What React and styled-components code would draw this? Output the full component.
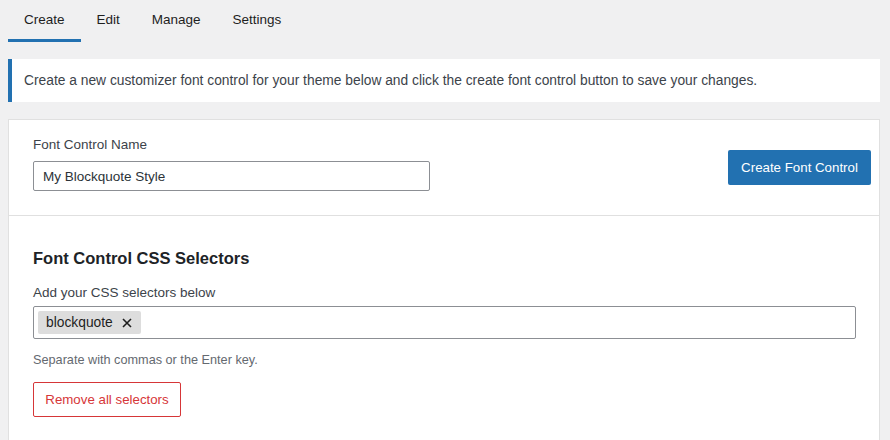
import styled, { createGlobalStyle } from "styled-components";

const GlobalStyle = createGlobalStyle`
  html, body {
    margin: 0;
    padding: 0;
    background: #f0f0f1;
  }
  body {
    font-family: "Liberation Sans", Arial, sans-serif;
    color: #1e1e1e;
    -webkit-font-smoothing: antialiased;
  }
`;

const Page = styled.div`
  width: 872px;
  padding: 0 10px 0 8px;
`;

const Tabs = styled.nav`
  display: flex;
  height: 42px;
`;

const Tab = styled.button`
  appearance: none;
  background: none;
  border: 0;
  padding: 0 16px 3px;
  font: 500 13.5px "Liberation Sans", Arial, sans-serif;
  color: #1e1e1e;
  box-shadow: ${(p) => (p.active ? "inset 0 -3px 0 #2271b1" : "none")};
  cursor: pointer;
`;

const Notice = styled.div`
  margin-top: 17px;
  height: 43px;
  display: flex;
  align-items: center;
  background: #fff;
  border-left: 4px solid #2271b1;
  padding: 0 12px;
  font-size: 13.8px;
  color: #3c434a;
`;

const Card = styled.div`
  margin-top: 17px;
  background: #fff;
  border: 1px solid #e0e0e0;
  border-bottom: 0;
`;

const Section = styled.div`
  padding: ${(p) => p.pad};
  & + & {
    border-top: 1px solid #e0e0e0;
  }
`;

const Row = styled.div`
  display: flex;
  justify-content: space-between;
  align-items: flex-end;
`;

const Field = styled.div`
  display: flex;
  flex-direction: column;
`;

const Label = styled.label`
  font-size: 13.5px;
  line-height: 20px;
  color: #3c434a;
  margin-bottom: ${(p) => p.space}px;
`;

const TextInput = styled.input`
  box-sizing: border-box;
  width: 397px;
  height: 30px;
  padding: 0 9px;
  border: 1px solid #8c8f94;
  border-radius: 2px;
  font: 13.5px "Liberation Sans", Arial, sans-serif;
  color: #2c3338;
  outline: none;
`;

const PrimaryButton = styled.button`
  box-sizing: border-box;
  width: 143px;
  height: 35px;
  margin-bottom: 6px;
  background: #2271b1;
  border: 0;
  border-radius: 2px;
  color: #fff;
  font: 13.3px "Liberation Sans", Arial, sans-serif;
  cursor: pointer;
`;

const Heading = styled.h2`
  margin: 0 0 15px;
  font-size: 16.5px;
  line-height: 20px;
  font-weight: 700;
  color: #1d2327;
`;

const TokenField = styled.div`
  box-sizing: border-box;
  height: 33px;
  display: flex;
  align-items: center;
  padding: 0 4px;
  border: 1px solid #8c8f94;
  border-radius: 2px;
`;

const Token = styled.span`
  display: inline-flex;
  align-items: center;
  gap: 9px;
  height: 23px;
  padding: 0 9px 0 8px;
  background: #ddd;
  border-radius: 2px;
  font-size: 13.8px;
  color: #1e1e1e;
`;

const RemoveToken = styled.span`
  display: inline-flex;
  svg {
    display: block;
  }
`;

const Help = styled.p`
  margin: 12px 0 13px;
  font-size: 12.7px;
  line-height: 18px;
  color: #646970;
`;

const DangerButton = styled.button`
  box-sizing: border-box;
  width: 148px;
  height: 35px;
  background: #fff;
  border: 1px solid #d63638;
  border-radius: 2px;
  color: #d63638;
  font: 13.3px "Liberation Sans", Arial, sans-serif;
  cursor: pointer;
`;

const tabs = [
  { label: "Create", active: true },
  { label: "Edit" },
  { label: "Manage" },
  { label: "Settings" },
];

const App = () => {
  return (
    <Page>
      <GlobalStyle />
      <Tabs>
        {tabs.map((t) => (
          <Tab key={t.label} active={t.active}>
            {t.label}
          </Tab>
        ))}
      </Tabs>

      <Notice>
        Create a new customizer font control for your theme below and click the create font control
        button to save your changes.
      </Notice>

      <Card>
        <Section pad="15px 8px 24px 24px">
          <Row>
            <Field>
              <Label space={6}>Font Control Name</Label>
              <TextInput defaultValue="My Blockquote Style" />
            </Field>
            <PrimaryButton>Create Font Control</PrimaryButton>
          </Row>
        </Section>

        <Section pad="32px 23px 40px 24px">
          <Heading>Font Control CSS Selectors</Heading>
          <Label as="div" space={3}>Add your CSS selectors below</Label>
          <TokenField>
            <Token>
              blockquote
              <RemoveToken>
                <svg width="10" height="10" viewBox="0 0 10 10">
                  <path d="M1 1l8 8M9 1l-8 8" stroke="#1e1e1e" strokeWidth="1.6" />
                </svg>
              </RemoveToken>
            </Token>
          </TokenField>
          <Help>Separate with commas or the Enter key.</Help>
          <DangerButton>Remove all selectors</DangerButton>
        </Section>
      </Card>
    </Page>
  );
};

export default App;
